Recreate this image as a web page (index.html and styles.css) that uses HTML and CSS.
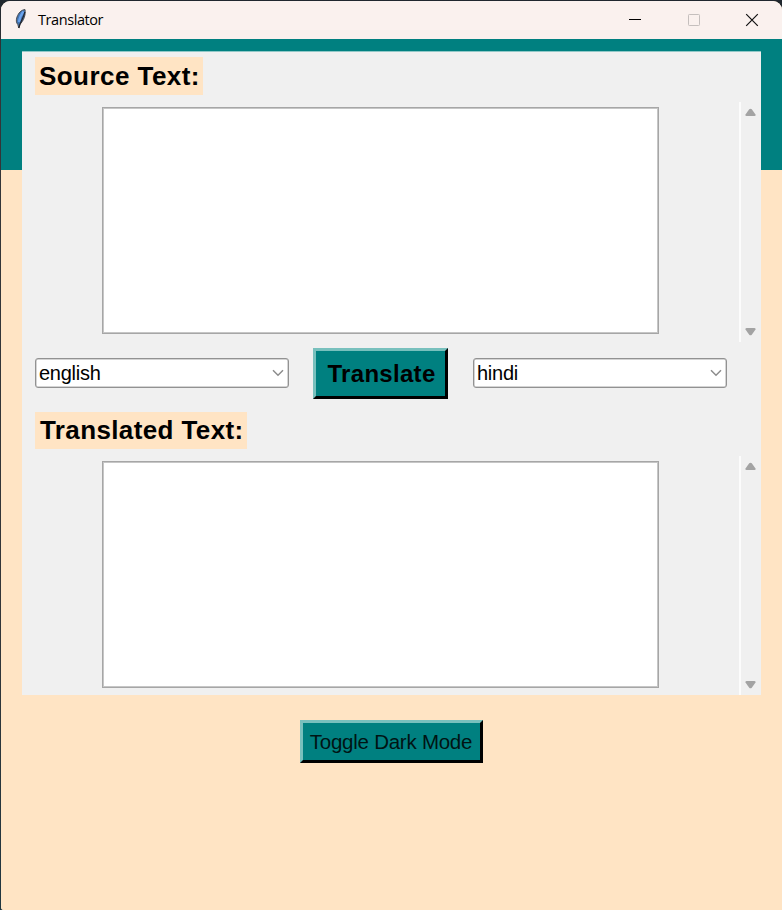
FILE: index.html
```html
<!DOCTYPE html>
<html lang="en">
<head>
<meta charset="utf-8">
<title>Translator</title>
<link rel="stylesheet" href="styles.css">
</head>
<body>
<div class="window">
  <header class="titlebar">
    <svg class="feather" width="14" height="22" viewBox="0 0 14 22">
      <path d="M11 1.500C7 2 4.500 5 3 9C2 12 2 14.500 3.800 16.500L4.800 20L5.800 16.500C9.500 13 12 7 11 1.500Z" fill="#4173b0" stroke="#4b4d52" stroke-width="1"/>
      <path d="M9.500 3.500C7.500 6 5.500 10 5 14" fill="none" stroke="#6ba4ee" stroke-width="2.200"/>
      <path d="M10.800 4C10 9 6.500 13 4.800 20" fill="none" stroke="#20242c" stroke-width="1.200"/>
    </svg>
    <h1 class="title">Translator</h1>
    <div class="controls">
      <svg width="14" height="14" viewBox="0 0 14 14"><path d="M1 6.500H13" stroke="#000"/></svg>
      <svg width="14" height="14" viewBox="0 0 14 14"><rect x="1.500" y="1.500" width="11" height="11" rx=".8" fill="none" stroke="#c5bfbd"/></svg>
      <svg width="14" height="14" viewBox="0 0 14 14"><path d="M1.200 1.200L12.800 12.800M12.800 1.200L1.200 12.800" stroke="#111" stroke-width="1.200"/></svg>
    </div>
  </header>
  <main class="client">
    <section class="panel">
      <h2 class="label">Source Text:</h2>
      <div class="editor">
        <div class="textbox"></div>
        <div class="scrollbar">
          <svg width="11" height="9" viewBox="0 0 11 9"><path d="M4.200 1.300Q5.500 0 6.800 1.300L10.500 6.500Q11 8 9.500 8H1.500Q0 8 .5 6.500Z" fill="#a3a3a3"/></svg>
          <svg width="11" height="9" viewBox="0 0 11 9"><path d="M4.200 7.700Q5.500 9 6.800 7.700L10.500 2.500Q11 1 9.500 1H1.500Q0 1 .5 2.500Z" fill="#a3a3a3"/></svg>
        </div>
      </div>
      <div class="actions">
        <div class="combo"><span>english</span><svg width="12" height="8" viewBox="0 0 12 8"><path d="M1 1.300L6 6.300L11 1.300" fill="none" stroke="#8c8c8c" stroke-width="1.500"/></svg></div>
        <button class="button translate">Translate</button>
        <div class="combo"><span>hindi</span><svg width="12" height="8" viewBox="0 0 12 8"><path d="M1 1.300L6 6.300L11 1.300" fill="none" stroke="#8c8c8c" stroke-width="1.500"/></svg></div>
      </div>
      <h2 class="label translated">Translated Text:</h2>
      <div class="editor">
        <div class="textbox"></div>
        <div class="scrollbar">
          <svg width="11" height="9" viewBox="0 0 11 9"><path d="M4.200 1.300Q5.500 0 6.800 1.300L10.500 6.500Q11 8 9.500 8H1.500Q0 8 .5 6.500Z" fill="#a3a3a3"/></svg>
          <svg width="11" height="9" viewBox="0 0 11 9"><path d="M4.200 7.700Q5.500 9 6.800 7.700L10.500 2.500Q11 1 9.500 1H1.500Q0 1 .5 2.500Z" fill="#a3a3a3"/></svg>
        </div>
      </div>
    </section>
    <button class="button toggle">Toggle Dark Mode</button>
  </main>
</div>
</body>
</html>
```
FILE: styles.css
```css
* { box-sizing: border-box; }
body {
  margin: 0;
  height: 910px;
  padding: 1px 0 0 1px;
  overflow: hidden;
  background: linear-gradient(#20272e, #343538 60px, #343538 600px, #203640);
  font-family: "Liberation Sans", Arial, sans-serif;
  color: #000;
}
.window {
  height: 909px;
  border-radius: 9px 9px 0 3px;
  overflow: hidden;
  background: #ffe4c4;
}
.titlebar {
  display: flex;
  align-items: center;
  height: 38px;
  padding: 0 23px 0 13px;
  background: #faf1ee;
}
.feather { position: relative; top: -1px; }
.title {
  margin: 0 0 0 10px;
  font: 400 14.500px/20px "Open Sans", "Noto Sans", sans-serif;
  letter-spacing: -.42px;
}
.controls {
  display: flex;
  gap: 44.500px;
  margin-left: auto;
}
.controls svg, .feather, .scrollbar svg, .combo svg { display: block; flex: none; }
.client {
  height: 871px;
  padding: 12px 21px 0;
  background: linear-gradient(#008080 131px, #ffe4c4 131px);
}
.panel {
  width: 739px;
  height: 644px;
  padding: 5px 0 0 13px;
  background: #f0f0f0;
  border-top: 1px solid #91c8c7;
}
.label {
  width: 168px;
  height: 38px;
  margin: 0;
  padding-left: 4px;
  background: #ffe4c4;
  font-size: 26px;
  line-height: 38px;
  letter-spacing: .45px;
  white-space: nowrap;
}
.label.translated {
  width: 212px;
  height: 37px;
  margin-top: 13px;
  padding-left: 5px;
  line-height: 37px;
  letter-spacing: .38px;
}
.editor {
  display: flex;
  height: 240px;
  margin-top: 7px;
  padding-left: 67px;
}
.translated + .editor { height: 239px; }
.textbox {
  width: 557px;
  height: 227px;
  margin-top: 5px;
  margin-right: 80px;
  background: #fff;
  border: 1px solid #a6a6a6;
  box-shadow: inset 0 0 0 1px #c6c6c6;
}
.scrollbar {
  display: flex;
  flex-direction: column;
  justify-content: space-between;
  width: 21px;
  padding: 6px 0 6px 4px;
  border-left: 2px solid #fcfcfc;
}
.actions {
  display: flex;
  align-items: center;
  gap: 25px;
  height: 51px;
  margin-top: 6px;
}
.combo {
  display: flex;
  align-items: center;
  justify-content: space-between;
  width: 254px;
  height: 30px;
  margin-bottom: 2px;
  padding: 0 4px 0 3px;
  border: 1px solid #929292;
  border-radius: 3px;
  box-shadow: inset 0 0 0 .5px #aaa;
  background: #fff;
  font-size: 20px;
  letter-spacing: -.25px;
  line-height: 28px;
}
.button {
  display: block;
  flex: none;
  padding: 0;
  border: 3px solid;
  border-color: #78c0bd #000 #000 #78c0bd;
  background: #008080;
  color: #000;
  font-family: inherit;
  white-space: nowrap;
}
.translate {
  width: 135px;
  height: 51px;
  margin-left: -1px;
  padding-left: 2px;
  font-size: 24px;
  font-weight: 700;
  letter-spacing: .3px;
}
.toggle {
  width: 183px;
  height: 43px;
  margin: 25px 0 0 277.500px;
  color: #001414;
  font-size: 20.500px;
  letter-spacing: -.25px;
}
```
